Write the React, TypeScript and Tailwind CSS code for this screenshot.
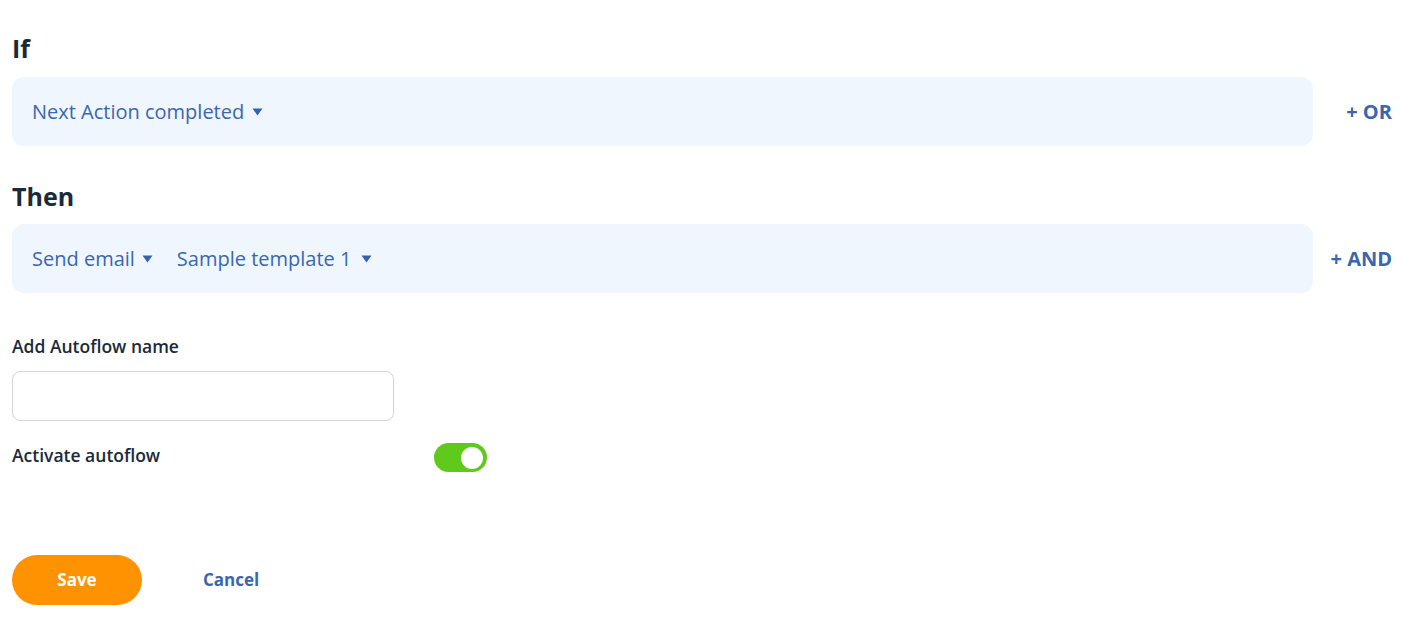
import React from "react";

function Caret() {
  return (
    <svg width="11" height="8" viewBox="0 0 11 8" className="inline-block">
      <path d="M0.5 0.5 H10.5 L5.5 7.5 Z" fill="#3461b0" />
    </svg>
  );
}

export default function App() {
  return (
    <div
      className="w-[1403px] h-[629px] bg-white pl-[12px] pt-[32px]"
      style={{ fontFamily: '"Open Sans", "Noto Sans", sans-serif' }}
    >
      <div className="h-[32px] leading-[32px] text-[25px] font-bold text-[#1b2a38]">If</div>
      <div className="flex items-center mt-[13px]">
        <div className="w-[1301px] h-[69px] rounded-[12px] bg-[#f0f6fe] flex items-center pl-[20px] gap-[8px] text-[20px] text-[#3a66af]">
          <span>Next Action completed</span>
          <Caret />
        </div>
        <div className="flex-1 text-right pr-[11px] text-[20px] font-bold text-[#3a66af]">+ OR</div>
      </div>

      <div className="h-[32px] leading-[32px] text-[25px] font-bold text-[#1b2a38] mt-[34px]">Then</div>
      <div className="flex items-center mt-[12px]">
        <div className="w-[1301px] h-[69px] rounded-[12px] bg-[#f0f6fe] flex items-center pl-[20px] text-[20px] text-[#3a66af]">
          <span>Send email</span>
          <span className="ml-[7px] flex"><Caret /></span>
          <span className="ml-[24px]">Sample template 1</span>
          <span className="ml-[10px] flex"><Caret /></span>
        </div>
        <div className="flex-1 text-right pr-[11px] text-[20px] font-bold text-[#3a66af]">+ AND</div>
      </div>

      <div className="mt-[41px] h-[24px] leading-[24px] text-[17.5px] font-semibold text-[#1b2a38]">Add Autoflow name</div>
      <input
        className="mt-[13px] w-[382px] h-[50px] rounded-[8px] border border-[#d2d4d8] outline-none px-3"
        type="text"
      />
      <div className="flex items-center mt-[22px] h-[29px]">
        <div className="w-[422px] text-[17.5px] font-semibold text-[#1b2a38] -mt-[4px]">Activate autoflow</div>
        <div className="w-[53px] h-[29px] rounded-full bg-[#5fc91c] relative">
          <div className="absolute right-[4px] top-[4px] w-[22px] h-[22px] rounded-full bg-white" />
        </div>
      </div>

      <div className="flex items-center mt-[83px]">
        <button className="w-[130px] h-[50px] rounded-full bg-[#ff9200] text-white text-[17px] font-bold">Save</button>
        <button className="ml-[61px] text-[17px] font-bold text-[#3a66af]">Cancel</button>
      </div>
    </div>
  );
}
